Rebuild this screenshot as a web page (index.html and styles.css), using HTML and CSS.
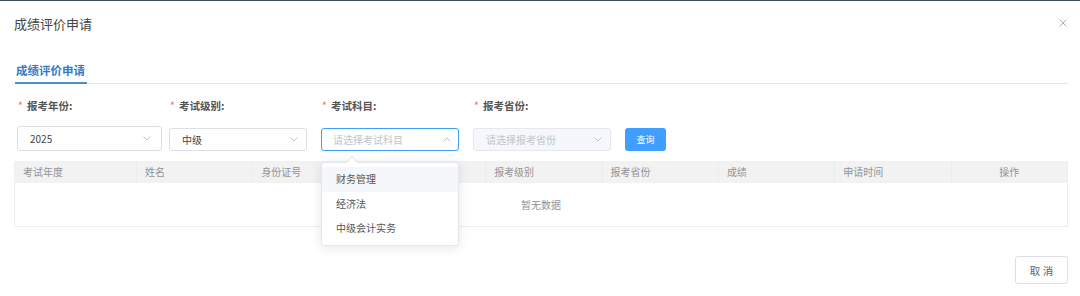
FILE: index.html
```html
<!DOCTYPE html>
<html lang="zh-CN">
<head>
    <meta charset="UTF-8">
    <title>成绩评价申请</title>
    <link rel="stylesheet" href="styles.css">
</head>
<body>
    <div class="dialog">
        <div class="dialog-header">
            <span class="dialog-title">成绩评价申请</span>
            <svg class="dialog-close" width="8" height="8" viewBox="0 0 8 8">
                <path d="M0.5 0.5L7.5 7.5M7.5 0.5L0.5 7.5" stroke="#b0b0b0" stroke-width="1" fill="none"/>
            </svg>
        </div>
        <div class="dialog-body">
            <div class="tabs">
                <div class="tab tab-active">成绩评价申请</div>
            </div>

            <div class="form">
                <div class="field field-year">
                    <label class="field-label"><span class="star">*</span>报考年份:</label>
                    <div class="select select-tall">
                        <span class="select-value">2025</span>
                        <svg class="arrow" width="8" height="5" viewBox="0 0 8 5"><path d="M0.5 0.5L4 4L7.5 0.5" stroke="#c0c4cc" fill="none"/></svg>
                    </div>
                </div>
                <div class="field field-level">
                    <label class="field-label"><span class="star">*</span>考试级别:</label>
                    <div class="select">
                        <span class="select-value">中级</span>
                        <svg class="arrow" width="8" height="5" viewBox="0 0 8 5"><path d="M0.5 0.5L4 4L7.5 0.5" stroke="#c0c4cc" fill="none"/></svg>
                    </div>
                </div>
                <div class="field field-subject">
                    <label class="field-label"><span class="star">*</span>考试科目:</label>
                    <div class="select select-focus">
                        <span class="select-placeholder">请选择考试科目</span>
                        <svg class="arrow" width="8" height="5" viewBox="0 0 8 5"><path d="M0.5 4.5L4 1L7.5 4.5" stroke="#c0c4cc" fill="none"/></svg>
                    </div>
                    <div class="dropdown">
                        <div class="dropdown-tip"></div>
                        <div class="dropdown-item hover">财务管理</div>
                        <div class="dropdown-item">经济法</div>
                        <div class="dropdown-item">中级会计实务</div>
                    </div>
                </div>
                <div class="field field-province">
                    <label class="field-label"><span class="star">*</span>报考省份:</label>
                    <div class="select select-disabled">
                        <span class="select-placeholder">请选择报考省份</span>
                        <svg class="arrow" width="8" height="5" viewBox="0 0 8 5"><path d="M0.5 0.5L4 4L7.5 0.5" stroke="#c0c4cc" fill="none"/></svg>
                    </div>
                </div>
                <button class="btn-primary">查询</button>
            </div>

            <div class="table">
                <div class="table-head">
                    <div class="th th-first">考试年度</div>
                    <div class="th">姓名</div>
                    <div class="th">身份证号</div>
                    <div class="th">报考科目</div>
                    <div class="th">报考级别</div>
                    <div class="th">报考省份</div>
                    <div class="th">成绩</div>
                    <div class="th">申请时间</div>
                    <div class="th th-center">操作</div>
                </div>
                <div class="table-empty">暂无数据</div>
            </div>
        </div>
        <div class="dialog-footer">
            <button class="btn-default">取 消</button>
        </div>
    </div>
</body>
</html>
```

FILE: styles.css
```css
* {
    box-sizing: border-box;
}

body {
    margin: 0;
    font-family: "Noto Sans CJK SC", "Noto Sans", sans-serif;
    font-size: 10px;
    color: #606266;
    background: #fff;
}

.dialog {
    border-top: 1px solid #3e4c59;
    height: 296px;
}

.dialog-header {
    display: flex;
    justify-content: space-between;
    align-items: center;
    height: 44px;
    padding: 0 13px 0 14px;
}
.dialog-title {
    font-size: 13px;
    color: #444;
}
.dialog-close {
    display: block;
}

.dialog-body {
    padding: 0 12px 0 14px;
}

.tabs {
    display: flex;
    margin-left: 1px;
    margin-top: 13px;
    border-bottom: 1px solid #e4e7ed;
}
.tab {
    height: 26px;
    line-height: 24px;
    padding: 0 2px 0 1px;
    font-size: 11.5px;
    font-weight: bold;
    color: #2f7bc4;
}
.tab-active {
    border-bottom: 2px solid #4a8fd0;
    margin-bottom: -1px;
}

.form {
    display: flex;
    align-items: flex-end;
    margin-top: 13px;
    padding-left: 3px;
}
.field {
    position: relative;
    display: flex;
    flex-direction: column;
    margin-right: 14px;
}
.field-label {
    height: 18px;
    line-height: 18px;
    margin-left: 1px;
    margin-bottom: 13px;
    font-size: 10.5px;
    font-weight: bold;
    color: #555;
}
.star {
    color: #f56c6c;
    margin-right: 4px;
    font-weight: normal;
}
.field-year { width: 145px; margin-right: 7px; }
.field-level { width: 138px; }
.field-subject { width: 138px; }
.field-province { width: 138px; }
.field-year .field-label { margin-bottom: 11px; }

.select {
    display: flex;
    align-items: center;
    justify-content: space-between;
    height: 23px;
    padding: 0 8px 0 12px;
    border: 1px solid #dcdfe6;
    border-radius: 3px;
    background: #fff;
}
.select-tall {
    height: 25px;
    padding-right: 10px;
}
.select-value {
    color: #444;
}
.select-placeholder {
    color: #c0c4cc;
}
.select-focus {
    border-color: #409eff;
    padding-left: 11px;
    padding-right: 7px;
}
.select-disabled {
    background: #f5f7fa;
    border-color: #e4e7ed;
}
.arrow {
    display: block;
}

.dropdown {
    position: absolute;
    top: 65px;
    left: 0;
    width: 138px;
    padding: 4px 0;
    background: #fff;
    border: 1px solid #e4e7ed;
    border-radius: 3px;
    box-shadow: 0 2px 12px rgba(0, 0, 0, 0.1);
    z-index: 10;
}
.dropdown-tip {
    position: absolute;
    top: -5px;
    left: 26px;
    width: 8px;
    height: 8px;
    background: #fff;
    border-left: 1px solid #e4e7ed;
    border-top: 1px solid #e4e7ed;
    transform: rotate(45deg);
}
.dropdown-item {
    height: 24.5px;
    line-height: 24px;
    padding: 0 14px;
    color: #555;
}
.dropdown-item.hover {
    background: #f5f7fa;
}

.btn-primary {
    width: 41px;
    height: 23px;
    padding: 0;
    border: 0;
    border-radius: 3px;
    background: #409eff;
    color: #fff;
    font-family: inherit;
    font-size: 9px;
}

.table {
    margin-top: 10px;
    border: 1px solid #ebeef5;
    border-top: 0;
}
.table-head {
    display: grid;
    grid-template-columns: 121px repeat(8, 1fr);
    height: 22px;
    background: #f2f2f2;
}
.th {
    line-height: 22px;
    padding-left: 8px;
    color: #909399;
    border-left: 1px solid #ececec;
}
.th-first {
    border-left: 0;
}
.th-center {
    text-align: center;
    padding-left: 0;
}
.table-empty {
    height: 43px;
    line-height: 43px;
    text-align: center;
    color: #909399;
}

.dialog-footer {
    display: flex;
    justify-content: flex-end;
    padding: 29px 12px 0;
}
.btn-default {
    width: 53px;
    height: 28px;
    padding: 0;
    background: #fff;
    border: 1px solid #dcdfe6;
    border-radius: 3px;
    color: #606266;
    font-family: inherit;
    font-size: 10.5px;
}
```
